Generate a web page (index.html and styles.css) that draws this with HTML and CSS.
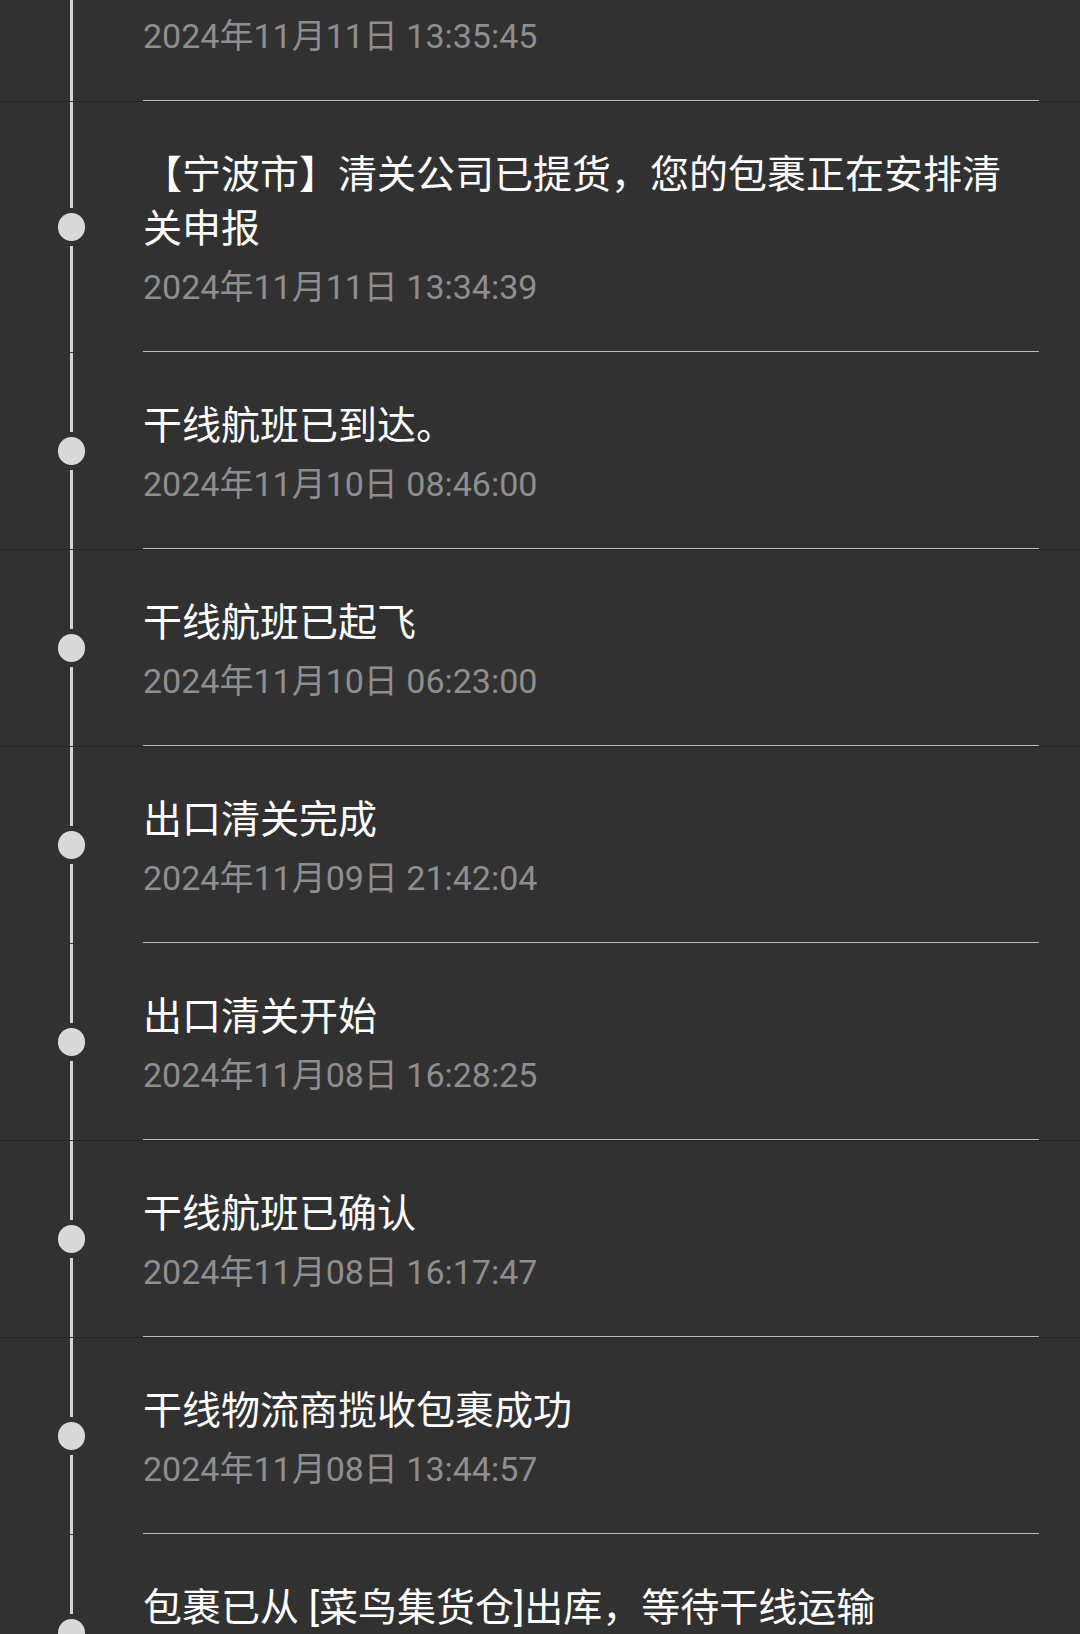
FILE: index.html
```html
<!DOCTYPE html>
<html lang="zh-CN">
<head>
  <meta charset="UTF-8" />
  <meta name="viewport" content="width=device-width, initial-scale=1" />
  <title>物流详情</title>
  <link rel="stylesheet" href="styles.css">
</head>
<body>
  <ul class="track">
    <!-- first row is scrolled partly out of view -->
    <li class="track-item seam">
      <div class="rail"><span class="seg"></span><span class="dot"></span><span class="seg"></span></div>
      <div class="info">
        <p class="title">【宁波市】您的包裹已完成清关，正在安排派送至下一站点</p>
        <p class="time">2024年11月11日 13:35:45</p>
      </div>
      <div class="gutter"></div>
    </li>
    <li class="track-item">
      <div class="rail"><span class="seg"></span><span class="dot"></span><span class="seg"></span></div>
      <div class="info">
        <p class="title">【宁波市】清关公司已提货，您的包裹正在安排清关申报</p>
        <p class="time">2024年11月11日 13:34:39</p>
      </div>
      <div class="gutter"></div>
    </li>
    <li class="track-item seam">
      <div class="rail"><span class="seg"></span><span class="dot"></span><span class="seg"></span></div>
      <div class="info">
        <p class="title">干线航班已到达。</p>
        <p class="time">2024年11月10日 08:46:00</p>
      </div>
      <div class="gutter"></div>
    </li>
    <li class="track-item seam">
      <div class="rail"><span class="seg"></span><span class="dot"></span><span class="seg"></span></div>
      <div class="info">
        <p class="title">干线航班已起飞</p>
        <p class="time">2024年11月10日 06:23:00</p>
      </div>
      <div class="gutter"></div>
    </li>
    <li class="track-item">
      <div class="rail"><span class="seg"></span><span class="dot"></span><span class="seg"></span></div>
      <div class="info">
        <p class="title">出口清关完成</p>
        <p class="time">2024年11月09日 21:42:04</p>
      </div>
      <div class="gutter"></div>
    </li>
    <li class="track-item seam">
      <div class="rail"><span class="seg"></span><span class="dot"></span><span class="seg"></span></div>
      <div class="info">
        <p class="title">出口清关开始</p>
        <p class="time">2024年11月08日 16:28:25</p>
      </div>
      <div class="gutter"></div>
    </li>
    <li class="track-item seam">
      <div class="rail"><span class="seg"></span><span class="dot"></span><span class="seg"></span></div>
      <div class="info">
        <p class="title">干线航班已确认</p>
        <p class="time">2024年11月08日 16:17:47</p>
      </div>
      <div class="gutter"></div>
    </li>
    <li class="track-item">
      <div class="rail"><span class="seg"></span><span class="dot"></span><span class="seg"></span></div>
      <div class="info">
        <p class="title">干线物流商揽收包裹成功</p>
        <p class="time">2024年11月08日 13:44:57</p>
      </div>
      <div class="gutter"></div>
    </li>
    <li class="track-item">
      <div class="rail"><span class="seg"></span><span class="dot"></span><span class="seg"></span></div>
      <div class="info">
        <p class="title">包裹已从 [菜鸟集货仓]出库，等待干线运输</p>
        <p class="time">2024年11月08日 10:12:33</p>
      </div>
      <div class="gutter"></div>
    </li>
  </ul>
</body>
</html>
```

FILE: styles.css
```css
html, body {
  height: 100%;
  overflow: hidden;
}

body {
  margin: 0;
  padding: 0;
  background: #313131;
  font-family: Roboto, "Noto Sans CJK SC", sans-serif;
  color: #fff;
}

.track {
  list-style: none;
  margin: -149px 0 0;
  padding: 0;
}

.track-item {
  display: flex;
  border-bottom: 1px solid transparent;
}

.track-item.seam {
  border-bottom-color: #262626;
}

/* timeline rail */
.rail {
  width: 143px;
  flex-shrink: 0;
  display: flex;
  flex-direction: column;
  align-items: center;
}

.seg {
  flex: 1;
  width: 3px;
  background: #d4d4d4;
}

.dot {
  width: 27.5px;
  height: 27.5px;
  margin: 5.5px 0;
  border-radius: 50%;
  background: #d9d9d9;
}

.info {
  flex: 1;
  padding: 46px 0 42px;
  border-bottom: 1px solid #bdbdbd;
}

.gutter {
  width: 41px;
  flex-shrink: 0;
}

.title {
  margin: 0;
  padding-right: 30px;
  font-size: 39px;
  line-height: 54px;
  color: #fff;
}

.time {
  margin: 9px 0 0;
  font-size: 34px;
  line-height: 44px;
  color: #8e8e8e;
}
```
